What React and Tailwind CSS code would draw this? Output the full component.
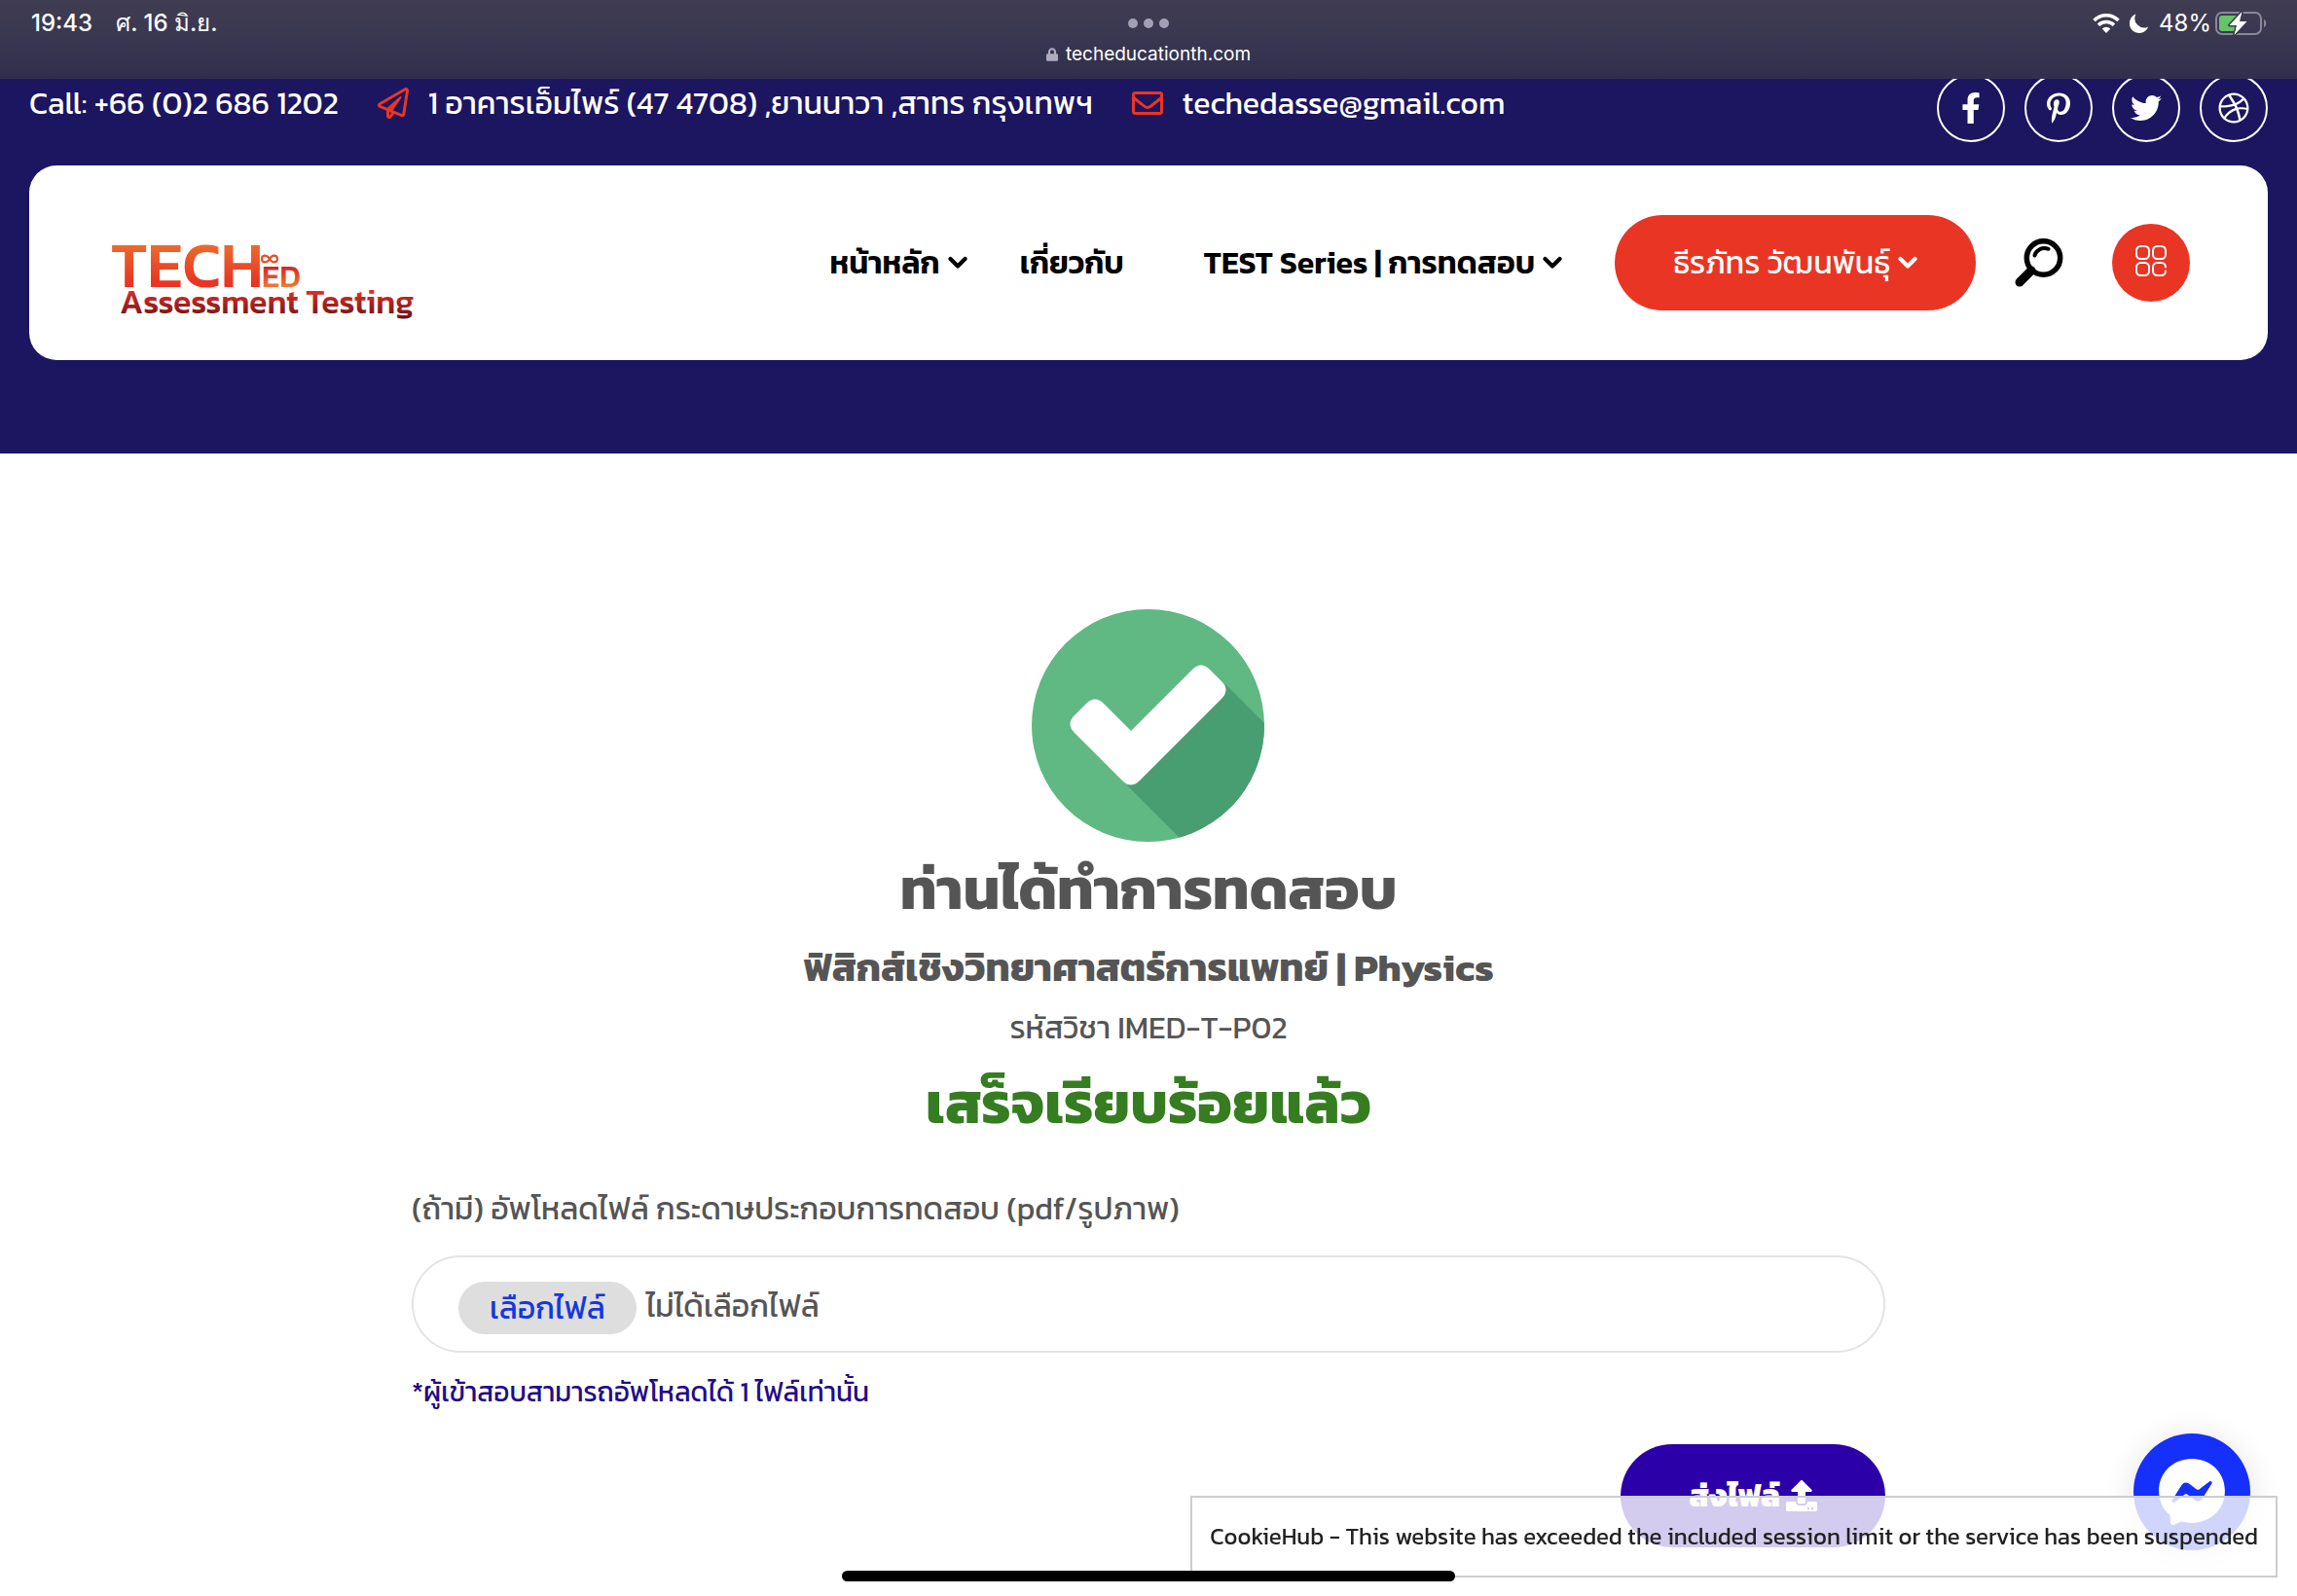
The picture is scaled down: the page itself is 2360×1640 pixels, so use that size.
import React from "react";
import {
  FaFacebookF,
  FaPinterestP,
  FaTwitter,
  FaDribbble,
  FaUpload,
  FaRegEnvelope,
  FaRegPaperPlane,
  FaFacebookMessenger,
  FaLock,
} from "react-icons/fa";

function Chevron() {
  return (
    <svg width="20" height="14" viewBox="0 0 20 14" fill="none" stroke="currentColor" strokeWidth="4.200" strokeLinecap="round" strokeLinejoin="round" aria-hidden="true">
      <path d="M2.500 3L10 10.500 17.500 3" />
    </svg>
  );
}

function StatusBar() {
  return (
    <div className="fixed inset-x-0 top-0 z-20 grid h-[81px] grid-cols-3 items-start bg-linear-to-b from-[#403d52] to-[#322f4e] px-8 font-['Inter','Noto_Sans',sans-serif] text-2xl text-white">
      <div className="flex h-12 items-center gap-6 font-medium">
        <span>19:43</span>
        <span>ศ. 16 มิ.ย.</span>
      </div>
      <div className="flex flex-col items-center">
        <div className="flex h-12 items-center gap-1.5">
          <span className="size-2.5 rounded-full bg-[#a3a0b5]" />
          <span className="size-2.5 rounded-full bg-[#a3a0b5]" />
          <span className="size-2.5 rounded-full bg-[#a3a0b5]" />
        </div>
        <div className="-mt-1 flex items-center gap-2 text-[19px] leading-6">
          <FaLock className="h-4 w-3 text-[#aeabbc]" />
          <span>techeducationth.com</span>
        </div>
      </div>
      <div className="-mr-0.5 flex h-12 items-center justify-end">
        <svg width="28" height="20" viewBox="0 0 28 20" fill="none" stroke="#fff" strokeWidth="3.6" aria-hidden="true">
          <path d="M1.500 7A17.500 17.500 0 0 1 26.500 7" />
          <path d="M6 11.800A11.500 11.500 0 0 1 22 11.800" />
          <path d="M14 20l-4.300-4.600a6.200 6.200 0 0 1 8.600 0z" fill="#fff" stroke="none" />
        </svg>
        <svg className="ml-2.5" width="20" height="20" viewBox="0 0 20 20" fill="#fff" aria-hidden="true">
          <path d="M6.500.5A10 10 0 1 0 19.200 13.400 9.500 9.500 0 0 1 6.500.5z" />
        </svg>
        <span className="ml-2.5">48%</span>
        <svg className="ml-1" width="54" height="26" viewBox="0 0 54 26" aria-hidden="true">
          <rect x="1" y="2" width="46" height="22" rx="6" fill="none" stroke="#8a8898" strokeWidth="2" />
          <path d="M50 9c3 1 3 7 0 8z" fill="#8a8898" />
          <path d="M7 5H24V21H7a3 3 0 0 1-3-3V8a3 3 0 0 1 3-3z" fill="#65c466" />
          <path d="M27.500 1L14.500 15H22L19.500 25 32.500 11H25z" fill="#fff" stroke="#3c394f" strokeWidth="3" paintOrder="stroke" strokeLinejoin="round" />
        </svg>
      </div>
    </div>
  );
}

const socials = [
  { name: "Facebook", Icon: FaFacebookF },
  { name: "Pinterest", Icon: FaPinterestP },
  { name: "Twitter", Icon: FaTwitter },
  { name: "Dribbble", Icon: FaDribbble },
];

function TopBar() {
  return (
    <div className="flex items-start justify-between text-white">
      <div className="flex items-center gap-10 pt-1.5">
        <span>Call: +66 (0)2 686 1202</span>
        <span className="flex items-center gap-5">
          <FaRegPaperPlane className="size-8 text-[#e93524]" />
          1 อาคารเอ็มไพร์ (47 4708) ,ยานนาวา ,สาทร กรุงเทพฯ
        </span>
        <a href="mailto:techedasse@gmail.com" className="flex items-center gap-5">
          <FaRegEnvelope className="size-8 text-[#e93524]" />
          techedasse@gmail.com
        </a>
      </div>
      <div className="flex gap-5">
        {socials.map(({ name, Icon }) => (
          <a key={name} href="#" aria-label={name} className="flex size-[70px] items-center justify-center rounded-full border-2 border-white">
            <Icon className="size-8" />
          </a>
        ))}
      </div>
    </div>
  );
}

function Logo() {
  return (
    <svg width="320" height="136" viewBox="0 0 320 136" role="img" aria-label="TECH ED Assessment Testing" fontFamily="Kanit, 'Noto Sans', sans-serif" fontWeight="500">
      <defs>
        <linearGradient id="tech" gradientUnits="userSpaceOnUse" x1="0" y1="46" x2="0" y2="92">
          <stop offset="0" stopColor="#ee6f2d" />
          <stop offset="0.9" stopColor="#e93524" />
        </linearGradient>
        <linearGradient id="ed" gradientUnits="userSpaceOnUse" x1="0" y1="70" x2="0" y2="94">
          <stop offset="0" stopColor="#c4252a" />
          <stop offset="0.4" stopColor="#e2402a" />
          <stop offset="1" stopColor="#ef8030" />
        </linearGradient>
        <linearGradient id="assess" gradientUnits="userSpaceOnUse" x1="0" y1="96" x2="0" y2="128">
          <stop offset="0" stopColor="#e02f26" />
          <stop offset="1" stopColor="#5e1216" />
        </linearGradient>
      </defs>
      <text x="-1" y="93" fontSize="66" fill="url(#tech)">TECH</text>
      <text x="154" y="93" fontSize="33" fill="url(#ed)">ED</text>
      <path d="M162 64c-3-5-8-4-8 0s5 5 8 0 8-4 8 0-5 5-8 0z" fill="none" stroke="#e2502a" strokeWidth="2.200" />
      <text x="8" y="120" fontSize="34" fill="url(#assess)">Assessment Testing</text>
    </svg>
  );
}

function NavBar() {
  return (
    <nav className="mt-6 flex h-[200px] items-center rounded-[28px] bg-white pr-20 pl-[85px] text-black">
      <a href="#">
        <Logo />
      </a>
      <div className="ml-auto flex items-center font-semibold">
        <a href="#" className="flex items-center gap-2">
          หน้าหลัก <Chevron />
        </a>
        <a href="#" className="ml-[54px]">เกี่ยวกับ</a>
        <a href="#" className="ml-[82px] flex items-center gap-2">
          TEST Series | การทดสอบ <Chevron />
        </a>
      </div>
      <button type="button" className="ml-[54px] flex h-[98px] items-center gap-2 rounded-full bg-[#e93524] px-[60px] text-white">
        ธีรภัทร วัฒนพันธุ์ <Chevron />
      </button>
      <button type="button" aria-label="Search" className="ml-10">
        <svg width="50" height="50" viewBox="0 0 50 50" fill="none" stroke="#000" strokeLinecap="round">
          <circle cx="29.500" cy="20" r="17.200" strokeWidth="5.500" />
          <path d="M17 33L5 45" strokeWidth="9" />
          <path d="M20.500 17.500C22 12 28 8.500 34.500 10.800" strokeWidth="4" />
        </svg>
      </button>
      <button type="button" aria-label="Menu" className="ml-[50px] flex size-20 items-center justify-center rounded-full bg-[#e93524] pb-1">
        <svg width="34" height="34" viewBox="0 0 34 34" fill="none" stroke="#fff" strokeWidth="2" strokeLinecap="round">
          <rect x="2" y="2" width="13" height="13" rx="4.500" />
          <rect x="19" y="2" width="13" height="13" rx="4.500" />
          <rect x="2" y="19" width="13" height="13" rx="4.500" />
          <path d="M32 23.500A4.500 4.500 0 0 0 27.500 19h-4A4.500 4.500 0 0 0 19 23.500v4A4.500 4.500 0 0 0 23.500 32h4A4.500 4.500 0 0 0 32 27.500" />
        </svg>
      </button>
    </nav>
  );
}

function SuccessMark() {
  return (
    <svg width="240" height="240" viewBox="0 0 240 240" role="img" aria-label="Done">
      <clipPath id="disc">
        <circle cx="119.500" cy="119.500" r="119.500" />
      </clipPath>
      <circle cx="119.500" cy="119.500" r="119.500" fill="#60b883" />
      <path d="M199 77L260 138V260H177L98 181L199 83Z" fill="#499e71" clipPath="url(#disc)" />
      <path d="M102 125L74 97Q65 88 56 97L44 109Q35 118 44 127L93 176Q102 185 111 176L195 92Q204 83 195 74L183 62Q174 53 165 62Z" fill="#fff" />
    </svg>
  );
}

function UploadForm() {
  return (
    <form className="flex flex-col" onSubmit={(e) => e.preventDefault()}>
      <label htmlFor="paper" className="mt-10">
        (ถ้ามี) อัพโหลดไฟล์ กระดาษประกอบการทดสอบ (pdf/รูปภาพ)
      </label>
      <label className="relative mt-6 flex h-[100px] cursor-pointer items-center gap-2.5 rounded-full border-2 border-[#e4e4e4] px-[46px]">
        <input id="paper" type="file" className="sr-only" />
        <span className="mt-2 flex h-[54px] items-center rounded-full bg-[#dedede] px-8 text-[#1238e0]">เลือกไฟล์</span>
        <span className="mt-1">ไม่ได้เลือกไฟล์</span>
      </label>
      <p className="mt-5 text-[28px] leading-10 text-[#220b87]">*ผู้เข้าสอบสามารถอัพโหลดได้ 1 ไฟล์เท่านั้น</p>
      <button type="submit" className="mt-[34px] flex h-[106px] items-center gap-1.5 self-end rounded-full bg-[#2c00a8] px-[70px] font-extrabold text-white">
        ส่งไฟล์ <FaUpload className="size-8" />
      </button>
    </form>
  );
}

export default function App() {
  return (
    <div className="min-h-screen bg-white font-['Kanit','Noto_Sans',sans-serif] text-[32px] leading-12 text-[#555]">
      <StatusBar />
      <header className="bg-[#1c1560] px-[30px] pt-[76px] pb-24">
        <TopBar />
        <NavBar />
      </header>
      <main className="mx-auto w-full max-w-[1514px] pt-40 pb-12">
        <section className="flex flex-col items-center text-center">
          <SuccessMark />
          <h1 className="mt-0.5 text-[60px] leading-[90px] font-bold">ท่านได้ทำการทดสอบ</h1>
          <h2 className="mt-1.5 text-[40px] leading-[60px] font-bold">ฟิสิกส์เชิงวิทยาศาสตร์การแพทย์ | Physics</h2>
          <p className="mt-2">รหัสวิชา IMED-T-P02</p>
          <p className="mt-2 text-[60px] leading-[90px] font-bold text-[#367d21]">เสร็จเรียบร้อยแล้ว</p>
        </section>
        <UploadForm />
      </main>
      <button type="button" aria-label="Messenger" className="fixed right-12 bottom-[47px] z-10 flex size-[120px] items-center justify-center rounded-full bg-[#1430fa] text-white shadow-[0_4px_32px_rgba(0,0,0,0.12)]">
        <FaFacebookMessenger className="size-[70px]" />
      </button>
      <div className="fixed right-5 bottom-[19px] z-10 border-2 border-[#cdcdcd] bg-white/80 px-[18px] py-5 text-2xl leading-10 text-[#222]">
        CookieHub - This website has exceeded the included session limit or the service has been suspended
      </div>
      <div className="fixed bottom-[15px] left-1/2 z-20 h-[11px] w-[630px] -translate-x-1/2 rounded-full bg-black" />
    </div>
  );
}
